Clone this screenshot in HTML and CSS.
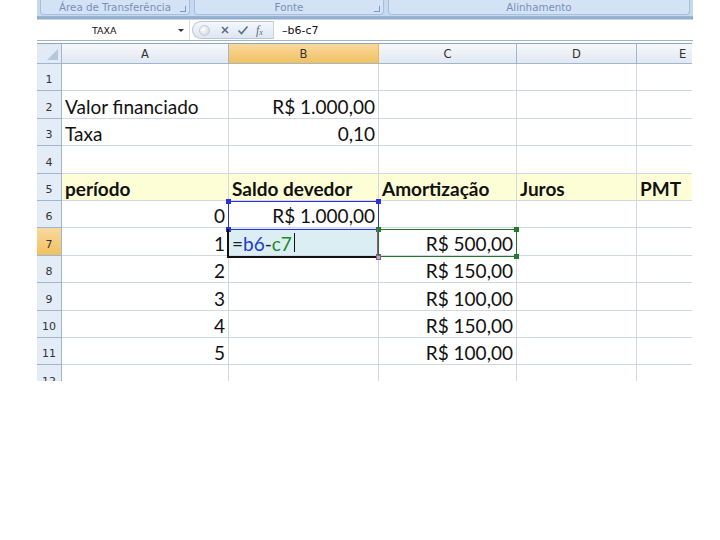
FILE: index.html
```html
<!DOCTYPE html>
<html lang="pt">
<head>
<meta charset="utf-8">
<title>Planilha</title>
<link rel="stylesheet" href="styles.css">
</head>
<body>
<div class="app">
  <div class="ribbon">
    <div class="group g1"><span>Área de Transferência</span><i class="launch"></i></div>
    <div class="group g2"><span>Fonte</span><i class="launch"></i></div>
    <div class="group g3"><span>Alinhamento</span></div>
  </div>
  <div class="ribbon-edge"></div>
  <div class="fbar">
    <div class="namebox"><span class="name">TAXA</span><span class="dd"></span></div>
    <div class="fbtns">
      <span class="knob"></span>
      <svg class="ic" width="10" height="10" viewBox="0 0 10 10"><path d="M2 2 L8 8 M8 2 L2 8" stroke="#5b6d86" stroke-width="1.6" fill="none"/></svg>
      <svg class="ic" width="12" height="10" viewBox="0 0 12 10"><path d="M1.5 5.5 L4.5 8.5 L10.5 1.5" stroke="#5b6d86" stroke-width="1.6" fill="none"/></svg>
      <span class="fx">f<sub>x</sub></span>
    </div>
    <div class="ftext">–b6-c7</div>
  </div>
  <div class="sheet">
    <div class="grid">
      <div class="corner"><span class="tri"></span></div>
      <div class="ch">A</div>
      <div class="ch sel">B</div>
      <div class="ch">C</div>
      <div class="ch">D</div>
      <div class="ch e">E</div>

      <div class="rh">1</div><div class="c"></div><div class="c"></div><div class="c"></div><div class="c"></div><div class="c"></div>
      <div class="rh">2</div><div class="c">Valor financiado</div><div class="c r">R$ 1.000,00</div><div class="c"></div><div class="c"></div><div class="c"></div>
      <div class="rh">3</div><div class="c">Taxa</div><div class="c r">0,10</div><div class="c"></div><div class="c"></div><div class="c"></div>
      <div class="rh">4</div><div class="c"></div><div class="c"></div><div class="c"></div><div class="c"></div><div class="c"></div>
      <div class="rh">5</div><div class="c y b">período</div><div class="c y b">Saldo devedor</div><div class="c y b">Amortização</div><div class="c y b">Juros</div><div class="c y b pmt">PMT</div>
      <div class="rh">6</div><div class="c r">0</div><div class="c r">R$ 1.000,00</div><div class="c"></div><div class="c"></div><div class="c"></div>
      <div class="rh sel">7</div><div class="c r">1</div><div class="c edit"><span class="eq">=</span><span class="blue">b6</span><span class="eq">-</span><span class="green">c7</span><span class="caret"></span></div><div class="c r">R$ 500,00</div><div class="c"></div><div class="c"></div>
      <div class="rh">8</div><div class="c r">2</div><div class="c"></div><div class="c r">R$ 150,00</div><div class="c"></div><div class="c"></div>
      <div class="rh">9</div><div class="c r">3</div><div class="c"></div><div class="c r">R$ 100,00</div><div class="c"></div><div class="c"></div>
      <div class="rh">10</div><div class="c r">4</div><div class="c"></div><div class="c r">R$ 150,00</div><div class="c"></div><div class="c"></div>
      <div class="rh">11</div><div class="c r">5</div><div class="c"></div><div class="c r">R$ 100,00</div><div class="c"></div><div class="c"></div>
      <div class="rh">12</div><div class="c"></div><div class="c"></div><div class="c"></div><div class="c"></div><div class="c"></div>
    </div>
    <div class="ref refb6"><i class="h tl"></i><i class="h tr"></i><i class="h bl"></i><i class="h br"></i></div>
    <div class="ref refc7"><i class="h tl"></i><i class="h tr"></i><i class="h bl"></i><i class="h br"></i></div>
    <div class="active"><i class="fill"></i></div>
  </div>
</div>
</body>
</html>
```
FILE: styles.css
```css
html, body { margin: 0; padding: 0; background: #fff; }
body { width: 720px; height: 540px; overflow: hidden; font-family: "Lato", "Open Sans", sans-serif; }

.app { margin-left: 37px; width: 656px; }

.ribbon {
  height: 16px; background: #c6d9f0; display: flex; gap: 4px; padding: 0 3px; overflow: hidden;
}
.group {
  height: 14px; background: #d3e2f5; border: 1px solid #a7bfdd; border-top: none;
  border-radius: 0 0 4px 4px; display: flex; align-items: flex-end; justify-content: center;
  position: relative; overflow: hidden;
}
.group span { font-family: "DejaVu Sans", sans-serif; font-size: 10.3px; line-height: 13px; color: #7890b5; white-space: nowrap; margin-bottom: 0; }
.g1 { width: 148px; }
.g2 { width: 188px; }
.g3 { flex: 1; }
.launch { position: absolute; right: 3px; bottom: 2px; width: 5px; height: 5px; border-right: 1px solid #7d98be; border-bottom: 1px solid #7d98be; }
.ribbon-edge { height: 3px; background: linear-gradient(#9db5d4, #8ea9cc); border-bottom: 1px solid #c9d8ec; }

.fbar { height: 20px; display: flex; align-items: stretch; border-bottom: 1px solid #a6b3c2; margin-bottom: 2px; }
.namebox { width: 152px; display: flex; align-items: center; position: relative; border-right: 1px solid #d8dde6; }
.name { font-family: "DejaVu Sans", sans-serif; font-size: 9.5px; color: #111; margin-left: 55px; }
.dd { position: absolute; right: 5px; top: 9px; width: 0; height: 0; border-left: 3px solid transparent; border-right: 3px solid transparent; border-top: 3px solid #333; }
.fbtns {
  width: 82px; margin: 1px 0 0 2px; height: 18px; display: flex; align-items: center; gap: 7px; padding-left: 6px; box-sizing: border-box;
  background: linear-gradient(#f4f7fb, #dde6f2); border: 1px solid #b7c6d8; border-radius: 10px 0 0 10px; border-right: 1px solid #c7d1dd;
}
.knob { width: 9px; height: 9px; border-radius: 50%; background: radial-gradient(circle at 35% 35%, #fff, #c7d0dc); border: 1px solid #c0c9d5; margin-right: 3px; }
.ic { display: block; }
.fx { font-family: "Liberation Serif", serif; font-style: italic; font-size: 12px; color: #5b6d86; }
.fx sub { font-size: 8px; vertical-align: -1px; }
.ftext { flex: 1; display: flex; align-items: center; padding-left: 8px; font-family: "DejaVu Sans", sans-serif; font-size: 11px; color: #111; }

.sheet { position: relative; width: 655px; height: 338px; overflow: hidden; }
.grid {
  display: grid;
  grid-template-columns: 25px 167px 150px 138px 120px 80px;
  grid-template-rows: 21px repeat(12, 27.4px);
}
.corner { background: #e2eaf5; border-right: 1px solid #9eb6ce; border-bottom: 1px solid #9eb6ce; box-sizing: border-box; position: relative; border-top: 1px solid #8da4bf; }
.tri { position: absolute; right: 3px; bottom: 3px; width: 0; height: 0; border-left: 11px solid transparent; border-bottom: 11px solid #b5c7dc; }
.ch {
  background: linear-gradient(#f6f8fb, #e1e8f2); border-right: 1px solid #9eb6ce; border-bottom: 1px solid #9eb6ce; border-top: 1px solid #8da4bf;
  box-sizing: border-box; display: flex; align-items: center; justify-content: center;
  font-family: "DejaVu Sans", sans-serif; font-size: 11.5px; color: #333;
}
.ch.sel { background: linear-gradient(#f9d99f, #f1c15f); border-right-color: #f2b54a; }
.ch.e { justify-content: flex-start; padding-left: 42px; }
.rh {
  background: #e4ecf7; border-right: 1px solid #9eb6ce; border-bottom: 1px solid #9eb6ce; box-sizing: border-box;
  display: flex; align-items: flex-end; justify-content: center; padding-bottom: 4px;
  font-family: "DejaVu Sans", sans-serif; font-size: 11px; color: #333;
}
.rh.sel { background: linear-gradient(#f9d99f, #f1c15f); }
.c {
  border-right: 1px solid #d0d7e5; border-bottom: 1px solid #d0d7e5; box-sizing: border-box;
  display: flex; align-items: flex-end; padding: 0 3px 0 3px;
  font-size: 19px; line-height: 23px; color: #111; white-space: nowrap; overflow: visible;
}
.c.r { justify-content: flex-end; }
.c.y { background: #fefed6; }
.c.b { font-weight: bold; }
.c.edit { background: #daeef3; }
.eq { color: #222; }
.blue { color: #1e3ad6; }
.green { color: #1f8a2a; }
.caret { width: 1px; height: 19px; background: #111; margin-left: 2px; align-self: center; margin-bottom: -2px; }

.ref { position: absolute; box-sizing: border-box; }
.refb6 { left: 191px; top: 158.2px; width: 151px; height: 28.4px; border: 1px solid #2a32d8; }
.refc7 { left: 341px; top: 185.6px; width: 139px; height: 28.4px; border: 1px solid #237a2e; }
.refb6 .h { background: #2a32d8; }
.refc7 .h { background: #237a2e; }
.h { position: absolute; width: 5px; height: 5px; }
.tl { left: -3px; top: -3px; }
.tr { right: -3px; top: -3px; }
.bl { left: -3px; bottom: -3px; }
.br { right: -3px; bottom: -3px; }
.active { position: absolute; left: 190px; top: 185.6px; width: 151px; height: 29px; box-sizing: border-box; border-left: 2px solid #111; border-bottom: 2px solid #111; border-right: 1px solid #8a5b8a; }
.fill { position: absolute; right: -4px; bottom: -4px; width: 5px; height: 5px; background: #c9a6c9; border: 1px solid #8a5b8a; box-sizing: border-box; }
```
